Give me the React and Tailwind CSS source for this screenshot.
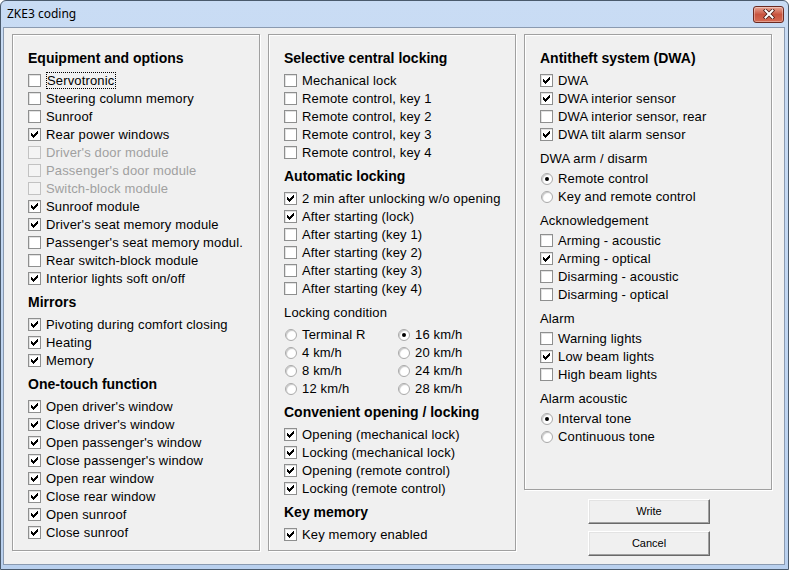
import clsx from 'clsx'

const left = [
  {
    title: 'Equipment and options',
    items: [
      { label: 'Servotronic', focus: true },
      { label: 'Steering column memory' },
      { label: 'Sunroof' },
      { label: 'Rear power windows', checked: true },
      { label: "Driver's door module", disabled: true },
      { label: "Passenger's door module", disabled: true },
      { label: 'Switch-block module', disabled: true },
      { label: 'Sunroof module', checked: true },
      { label: "Driver's seat memory module", checked: true },
      { label: "Passenger's seat memory modul." },
      { label: 'Rear switch-block module' },
      { label: 'Interior lights soft on/off', checked: true },
    ],
  },
  {
    title: 'Mirrors',
    items: [
      { label: 'Pivoting during comfort closing', checked: true },
      { label: 'Heating', checked: true },
      { label: 'Memory', checked: true },
    ],
  },
  {
    title: 'One-touch function',
    items: [
      "Open driver's window",
      "Close driver's window",
      "Open passenger's window",
      "Close passenger's window",
      'Open rear window',
      'Close rear window',
      'Open sunroof',
      'Close sunroof',
    ].map(label => ({ label, checked: true })),
  },
]

const speeds = [
  ['Terminal R', false],
  ['16 km/h', true],
  ['4 km/h', false],
  ['20 km/h', false],
  ['8 km/h', false],
  ['24 km/h', false],
  ['12 km/h', false],
  ['28 km/h', false],
]

function CheckBox({ checked, disabled }) {
  return (
    <span
      className={clsx(
        'flex h-[13px] w-[13px] shrink-0 items-center justify-center border',
        disabled
          ? 'border-[#c2c2c2] bg-[#f4f4f4]'
          : 'border-[#8e8f8f] bg-white shadow-[inset_1px_1px_0_#e2e2e2]'
      )}
    >
      {checked && (
        <svg width="9" height="9" viewBox="0 0 9 9" shapeRendering="crispEdges">
          <path d="M1 3h1v1h1v1h1V4h1V3h1V2h1V1h1v3H7v1H6v1H5v1H4v1H3V7H2V6H1z" fill="#000" />
        </svg>
      )}
    </span>
  )
}

function Radio({ checked }) {
  return (
    <span className="flex w-[13px] shrink-0 justify-center">
      <span className="flex h-[12px] w-[12px] items-center justify-center rounded-full border border-[#a9a9a9] bg-white shadow-[inset_1px_1px_1px_#c8c8c8]">
        {checked && <span className="h-[4px] w-[4px] rounded-full bg-black" />}
      </span>
    </span>
  )
}

function Check({ label, checked, disabled, focus }) {
  return (
    <div className="flex h-[18px] items-center">
      <CheckBox checked={checked} disabled={disabled} />
      <span
        className={clsx(
          'ml-[5px] whitespace-nowrap leading-[15px]',
          disabled ? 'text-[#a0a0a0]' : 'text-black',
          focus && '-ml-[-4px] border border-dotted border-black pr-px'
        )}
      >
        {label}
      </span>
    </div>
  )
}

function Option({ label, checked }) {
  return (
    <div className="flex h-[18px] items-center pt-[2px]">
      <Radio checked={checked} />
      <span className="ml-[5px] whitespace-nowrap">{label}</span>
    </div>
  )
}

function Heading({ children, first }) {
  return (
    <div
      className={clsx(
        'flex h-[22px] items-center text-[14px] font-bold tracking-normal',
        !first && 'mt-[4px]'
      )}
    >
      {children}
    </div>
  )
}

function Label({ children, gap }) {
  return (
    <div className={clsx('mt-[4px] flex h-[22px] items-center pt-[2px]', gap && 'mb-[2px]')}>
      {children}
    </div>
  )
}

function Checks({ items }) {
  return (
    <div className="mt-[2px]">
      {items.map(it => (
        <Check key={it.label} {...it} />
      ))}
    </div>
  )
}

function Panel({ className, children }) {
  return (
    <div
      className={clsx(
        'border border-[#a0a0a0] pl-[15px] pt-[12px] shadow-[inset_1px_1px_0_#fff,1px_1px_0_#fff]',
        className
      )}
    >
      {children}
    </div>
  )
}

function Button({ children, className }) {
  return (
    <button
      className={clsx(
        'ml-[64px] h-[25px] w-[122px] border border-t-white border-l-white border-r-[#696969] border-b-[#696969] bg-[#f0f0f0] text-[11px] tracking-normal text-black shadow-[inset_-1px_-1px_0_#a0a0a0,inset_1px_1px_0_#e3e3e3]',
        className
      )}
    >
      {children}
    </button>
  )
}

export default function App() {
  return (
    <div className="flex h-[570px] w-[789px] flex-col overflow-hidden rounded-t-[6px] border border-[#4a5a6c] bg-gradient-to-b from-[#c9dcf4] to-[#b9d0ee] font-['Liberation_Sans',Arial,sans-serif] text-[13px] tracking-[0.15px] text-black">
      <div className="flex h-[26px] shrink-0 items-center justify-between pl-[6px] pr-[4px]">
        <span className="font-['Noto_Sans',sans-serif] text-[12px] tracking-normal text-black">ZKE3 coding</span>
        <div className="flex h-[17px] w-[31px] items-center justify-center rounded-[3px] border border-[#6b2a22] bg-gradient-to-b from-[#e7a596] via-[#c8543f] to-[#d56a52] shadow-[inset_0_0_0_1px_rgba(255,255,255,0.35)]">
          <svg width="12" height="10" viewBox="0 0 12 10">
            <path d="M2.5 1.5l7 7M9.5 1.5l-7 7" stroke="#4a1d17" strokeWidth="3.6" strokeLinecap="square" />
            <path d="M2.5 1.5l7 7M9.5 1.5l-7 7" stroke="#fff" strokeWidth="2" strokeLinecap="square" />
          </svg>
        </div>
      </div>

      <div className="mb-[4px] ml-[2px] mr-[3px] flex-1 border border-[#8a9ab0] bg-[#f0f0f0]">
        <div className="grid grid-cols-[248px_248px_248px] gap-x-[8px] pl-[8px] pt-[6px]">
          <Panel className="h-[517px]">
            {left.map((s, i) => (
              <div key={s.title}>
                <Heading first={i === 0}>{s.title}</Heading>
                <Checks items={s.items} />
              </div>
            ))}
          </Panel>

          <Panel className="h-[517px]">
            <Heading first>Selective central locking</Heading>
            <Checks
              items={['Mechanical lock', 'Remote control, key 1', 'Remote control, key 2', 'Remote control, key 3', 'Remote control, key 4'].map(label => ({ label }))}
            />
            <Heading>Automatic locking</Heading>
            <Checks
              items={[
                { label: '2 min after unlocking w/o opening', checked: true },
                { label: 'After starting (lock)', checked: true },
                { label: 'After starting (key 1)' },
                { label: 'After starting (key 2)' },
                { label: 'After starting (key 3)' },
                { label: 'After starting (key 4)' },
              ]}
            />
            <Label gap>Locking condition</Label>
            <div className="grid grid-cols-[113px_auto]">
              {speeds.map(([label, checked]) => (
                <Option key={label} label={label} checked={checked} />
              ))}
            </div>
            <Heading>Convenient opening / locking</Heading>
            <Checks
              items={['Opening (mechanical lock)', 'Locking (mechanical lock)', 'Opening (remote control)', 'Locking (remote control)'].map(label => ({ label, checked: true }))}
            />
            <Heading>Key memory</Heading>
            <Checks items={[{ label: 'Key memory enabled', checked: true }]} />
          </Panel>

          <div className="flex flex-col">
            <Panel className="h-[456px]">
              <Heading first>Antitheft system (DWA)</Heading>
              <Checks
                items={[
                  { label: 'DWA', checked: true },
                  { label: 'DWA interior sensor', checked: true },
                  { label: 'DWA interior sensor, rear' },
                  { label: 'DWA tilt alarm sensor', checked: true },
                ]}
              />
              <Label>DWA arm / disarm</Label>
              <Option label="Remote control" checked />
              <Option label="Key and remote control" />
              <Label>Acknowledgement</Label>
              <Check label="Arming - acoustic" />
              <Check label="Arming - optical" checked />
              <Check label="Disarming - acoustic" />
              <Check label="Disarming - optical" />
              <Label>Alarm</Label>
              <Check label="Warning lights" />
              <Check label="Low beam lights" checked />
              <Check label="High beam lights" />
              <Label>Alarm acoustic</Label>
              <Option label="Interval tone" checked />
              <Option label="Continuous tone" />
            </Panel>
            <Button className="mt-[9px]">Write</Button>
            <Button className="mt-[7px]">Cancel</Button>
          </div>
        </div>
      </div>
    </div>
  )
}
